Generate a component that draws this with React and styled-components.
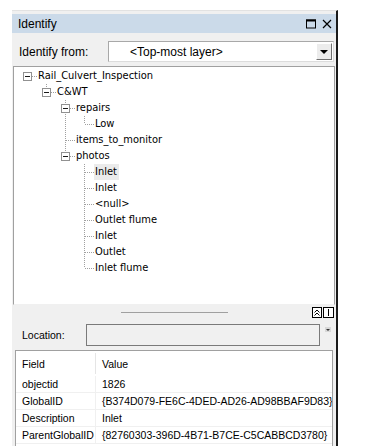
import React from "react"
import styled, { createGlobalStyle } from "styled-components"

const GlobalStyle = createGlobalStyle`
  html, body {
    margin: 0;
    background: #ffffff;
  }
  body {
    font-family: "Liberation Sans", Arial, sans-serif;
    color: #000;
  }
`

const Page = styled.div`
  width: 374px;
  height: 446px;
  overflow: hidden;
  padding: 10px 0 0 12px;
  box-sizing: border-box;
`

const Panel = styled.div`
  width: 326px;
  height: 436px;
  box-sizing: border-box;
  background: #f0f0f0;
  border-top: 1px solid #e2e2e2;
  border-right: 2px solid #1a1a1a;
  padding-top: 3px;
  display: flex;
  flex-direction: column;
`

const TitleBar = styled.div`
  height: 19px;
  background: #cbdae9;
  display: flex;
  align-items: center;
  padding: 0 4px 0 6px;
  font-size: 12px;
`

const Title = styled.span`
  flex: 1;
`

const TitleButton = styled.svg`
  width: 10px;
  height: 10px;
  margin-left: 6px;
`

const FromRow = styled.div`
  height: 33px;
  display: flex;
  align-items: center;
  padding: 0 2px 0 7px;
  font-size: 12px;
`

const FromLabel = styled.span`
  width: 89px;
  padding-top: 4px;
`

const Combo = styled.div`
  flex: 1;
  height: 21px;
  margin-top: 4px;
  box-sizing: border-box;
  border: 1px solid #a8a8a8;
  border-right-color: #dcdcdc;
  border-bottom-color: #dcdcdc;
  background: #fff;
  display: flex;
  align-items: center;
`

const ComboText = styled.span`
  flex: 1;
  padding-left: 21px;
`

const ComboButton = styled.div`
  width: 16px;
  height: 17px;
  margin-right: 1px;
  box-sizing: border-box;
  border: 1px solid #ffffff;
  border-right-color: #707070;
  border-bottom-color: #707070;
  background: #ececec;
  display: flex;
  align-items: center;
  justify-content: center;
`

const Arrow = styled.div`
  width: 0;
  height: 0;
  border-left: ${p => p.size}px solid transparent;
  border-right: ${p => p.size}px solid transparent;
  border-top: ${p => p.size}px solid ${p => p.color || "#000"};
`

const TreeBox = styled.div`
  height: 239px;
  margin: 0 1px;
  box-sizing: border-box;
  border: 1px solid #a0a0a0;
  border-bottom-color: #f0f0f0;
  background: #fff;
  padding: 1px 0 0 4px;
  font-family: "DejaVu Sans Condensed", "DejaVu Sans", sans-serif;
  font-stretch: condensed;
  font-size: 11px;
`

const Row = styled.div`
  height: 16px;
  display: flex;
  align-items: center;
`

const Cell = styled.svg`
  width: 19px;
  height: 16px;
  flex: none;
  shape-rendering: crispEdges;
`

const Label = styled.span`
  height: 16px;
  line-height: 16px;
  padding: 0 2px 0 1px;
  white-space: nowrap;
  background: ${p => (p.selected ? "#ebebeb" : "transparent")};
`

const Splitter = styled.div`
  height: 15px;
  display: flex;
  align-items: center;
  padding-right: 2px;
`

const Grip = styled.div`
  height: 1px;
  width: 107px;
  background: #a0a0a0;
  margin-left: 109px;
  flex: none;
`

const SplitButtons = styled.div`
  margin-left: auto;
  display: flex;
  gap: 1px;
`

const SplitButton = styled.div`
  width: ${p => p.w}px;
  height: 11px;
  box-sizing: border-box;
  border: 1px solid #000;
  background: #fff;
  display: flex;
  align-items: center;
  justify-content: center;
`

const LocationRow = styled.div`
  height: 30px;
  display: flex;
  align-items: center;
  padding: 0 0 0 10px;
  font-size: 10.5px;
`

const LocationLabel = styled.span`
  width: 64px;
`

const LocationInput = styled.div`
  width: 234px;
  height: 22px;
  box-sizing: border-box;
  border: 1px solid #7a7a7a;
  background: #f0f0f0;
`

const MiniDrop = styled.div`
  align-self: flex-start;
  margin: 7px 0 0 5px;
  width: 6px;
  height: 5px;
  background: #d8d8d8;
  display: flex;
  align-items: center;
  justify-content: center;
`

const Table = styled.div`
  flex: 1;
  margin: 0 3px 0 3px;
  border: 1px solid #a0a0a0;
  border-bottom: none;
  background: #fff;
  font-size: 10.5px;
`

const TableRow = styled.div`
  display: grid;
  grid-template-columns: 80px 1fr;
  height: ${p => (p.header ? 25 : 17)}px;
  border-bottom: 1px solid ${p => (p.header ? "#fff" : "#f0f0f0")};
  box-sizing: border-box;
`

const TableCell = styled.div`
  display: flex;
  align-items: center;
  padding-left: 6px;
  white-space: nowrap;
  overflow: hidden;
  border-right: ${p => (p.first ? `1px solid ${p.header ? "#e5e5e5" : "#f0f0f0"}` : "none")};
  ${p => p.header && "margin: 2px 0 1px;"}
`

const tree = {
  label: "Rail_Culvert_Inspection",
  children: [
    {
      label: "C&WT",
      children: [
        { label: "repairs", children: [{ label: "Low" }] },
        { label: "items_to_monitor" },
        {
          label: "photos",
          children: [
            { label: "Inlet", selected: true },
            { label: "Inlet" },
            { label: "<null>" },
            { label: "Outlet flume" },
            { label: "Inlet" },
            { label: "Outlet" },
            { label: "Inlet flume" },
          ],
        },
      ],
    },
  ],
}

// guides[k] is true when the ancestor at level k still has siblings below it
const flatten = (node, level, last, guides, out) => {
  out.push({ ...node, level, last, guides })
  const kids = node.children || []
  kids.forEach((kid, i) =>
    flatten(kid, level + 1, i === kids.length - 1, [...guides, !last], out)
  )
  return out
}

const dot = "#a0a0a0"

const GuideCell = ({ on }) => (
  <Cell viewBox="0 0 19 16">
    {on && <line x1="9.5" y1="0" x2="9.5" y2="16" stroke={dot} strokeDasharray="1 1" />}
  </Cell>
)

const NodeCell = ({ level, last, expandable }) => (
  <Cell viewBox="0 0 19 16">
    {level > 0 && <line x1="9.5" y1="0" x2="9.5" y2="8" stroke={dot} strokeDasharray="1 1" />}
    {!last && <line x1="9.5" y1="8" x2="9.5" y2="16" stroke={dot} strokeDasharray="1 1" />}
    <line x1={expandable ? 14 : 10} y1="8.5" x2="19" y2="8.5" stroke={dot} strokeDasharray="1 1" />
    {expandable && (
      <>
        <rect x="5.5" y="4.5" width="8" height="8" fill="#fff" stroke="#919191" />
        <line x1="7" y1="8.5" x2="12" y2="8.5" stroke="#1a1a1a" />
      </>
    )}
  </Cell>
)

const rows = flatten(tree, 0, true, [], [])

const attributes = [
  ["objectid", "1826"],
  ["GlobalID", "{B374D079-FE6C-4DED-AD26-AD98BBAF9D83}"],
  ["Description", "Inlet"],
  ["ParentGlobalID", "{82760303-396D-4B71-B7CE-C5CABBCD3780}"],
]

const App = () => (
  <Page>
    <GlobalStyle />
    <Panel>
      <TitleBar>
        <Title>Identify</Title>
        <TitleButton viewBox="0 0 10 10">
          <rect x="0.5" y="1" width="9" height="8" fill="none" stroke="#000" />
          <line x1="0" y1="1.5" x2="10" y2="1.5" stroke="#000" strokeWidth="2" />
        </TitleButton>
        <TitleButton viewBox="0 0 10 10">
          <path d="M1 1 L9 9 M9 1 L1 9" stroke="#000" strokeWidth="1.2" />
        </TitleButton>
      </TitleBar>
      <FromRow>
        <FromLabel>Identify from:</FromLabel>
        <Combo>
          <ComboText>&lt;Top-most layer&gt;</ComboText>
          <ComboButton>
            <Arrow size={4} />
          </ComboButton>
        </Combo>
      </FromRow>
      <TreeBox>
        {rows.map((r, i) => (
          <Row key={i}>
            {r.guides.map((g, j) => (
              <GuideCell key={j} on={g} />
            ))}
            <NodeCell level={r.level} last={r.last} expandable={!!r.children} />
            <Label selected={r.selected}>{r.label}</Label>
          </Row>
        ))}
      </TreeBox>
      <Splitter>
        <Grip />
        <SplitButtons>
          <SplitButton w={10}>
            <svg width="6" height="7" viewBox="0 0 6 7">
              <path d="M0.5 3.5 L3 1 L5.5 3.5 M0.5 6.5 L3 4 L5.5 6.5" fill="none" stroke="#000" />
            </svg>
          </SplitButton>
          <SplitButton w={11}>
            <svg width="1" height="7">
              <rect width="1" height="7" fill="#000" />
            </svg>
          </SplitButton>
        </SplitButtons>
      </Splitter>
      <LocationRow>
        <LocationLabel>Location:</LocationLabel>
        <LocationInput />
        <MiniDrop>
          <Arrow size={2} color="#333" />
        </MiniDrop>
      </LocationRow>
      <Table>
        <TableRow header>
          <TableCell first header>Field</TableCell>
          <TableCell header>Value</TableCell>
        </TableRow>
        {attributes.map(([f, v]) => (
          <TableRow key={f}>
            <TableCell first>{f}</TableCell>
            <TableCell>{v}</TableCell>
          </TableRow>
        ))}
      </Table>
    </Panel>
  </Page>
)

export default App
